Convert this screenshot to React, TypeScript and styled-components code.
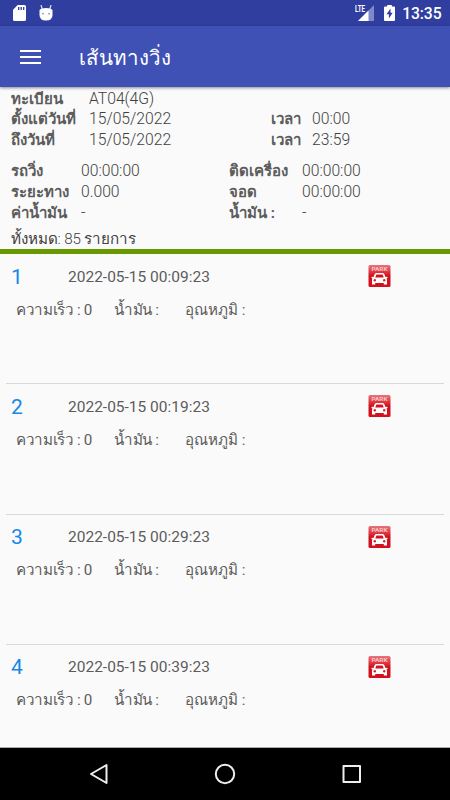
import React from 'react';
import styled, { createGlobalStyle } from 'styled-components';

const GlobalStyle = createGlobalStyle`
  * { box-sizing: border-box; }
  body {
    margin: 0;
    font-family: Roboto, sans-serif;
    background: #fafafa;
  }
`;

const Screen = styled.div`
  display: flex;
  flex-direction: column;
  width: 450px;
  height: 800px;
  overflow: hidden;
  background: #fafafa;
  color: #5c5c5c;
`;

const StatusBar = styled.header`
  display: flex;
  align-items: center;
  flex: 0 0 26px;
  height: 26px;
  padding: 0 8.5px 0 13px;
  background: #303f9f;
  color: #fff;
`;

const StatusIcons = styled.div`
  display: flex;
  gap: 13px;
  flex: 1;
`;

const Clock = styled.time`
  margin-left: 7.5px;
  font-size: 15.7px;
  font-weight: 500;
  line-height: 24px;
  letter-spacing: -0.1px;
  padding-top: 2px;
`;

const Battery = styled.svg`
  margin-left: 8.5px;
`;

const Toolbar = styled.div`
  display: flex;
  align-items: center;
  flex: 0 0 61px;
  padding: 0 20px;
  gap: 37px;
  background: #3f51b5;
  color: #fff;
  box-shadow: 0 1px 3px rgba(0, 0, 0, 0.45);
  z-index: 1;
`;

const Title = styled.h1`
  margin: 3px 0 0;
  font-size: 20.5px;
  font-weight: 400;
  line-height: 40px;
  white-space: nowrap;
`;

const Summary = styled.section`
  flex: 0 0 167px;
  padding: 1.5px 11px 0;
  border-bottom: 5px solid #669900;
`;

const Fields = styled.dl<{ $columns: string; $gap?: number }>`
  display: grid;
  grid-template-columns: ${(p) => p.$columns};
  grid-auto-rows: 20.8px;
  margin: 0 0 ${(p) => p.$gap ?? 0}px;
  line-height: 20.8px;
  font-size: 15.7px;
  white-space: nowrap;
`;

const Label = styled.dt<{ $start?: boolean }>`
  font-weight: 700;
  font-size: 15px;
  ${(p) => p.$start && 'grid-column-start: 1;'}
`;

const Value = styled.dd`
  margin: 0;
  font-weight: 300;
  color: #404040;
`;

const Total = styled.p`
  margin: 0;
  font-size: 15.2px;
  line-height: 20px;
  font-weight: 300;
  letter-spacing: -0.1px;
  color: #404040;
`;

const List = styled.main`
  flex: 1;
  min-height: 0;
  overflow: hidden;
  padding: 0 6px;
`;

const Item = styled.article`
  height: 130.3px;
  padding-top: 8px;
  border-bottom: 1px solid #d8d8d8;
`;

const ItemHead = styled.div`
  display: grid;
  grid-template-columns: 57px 300px 24px;
  align-items: center;
  height: 29px;
  padding-left: 5px;
`;

const Index = styled.span`
  font-size: 21px;
  font-weight: 400;
  color: #1588e8;
`;

const Stamp = styled.time`
  font-size: 15.5px;
  font-weight: 400;
`;

const Readings = styled.div`
  display: grid;
  grid-template-columns: 98px 71px 1fr;
  margin-top: 7.5px;
  padding-left: 10px;
  font-size: 15.2px;
  line-height: 22px;
  white-space: nowrap;
`;

const Reading = styled.span<{ $tracking?: number }>`
  letter-spacing: ${(p) => p.$tracking ?? 0}px;
`;

const NavBar = styled.nav`
  display: flex;
  justify-content: space-between;
  align-items: center;
  flex: 0 0 53px;
  padding: 0 87px;
  border-top: 1px solid #aaa;
  background: #000;
`;

const SdCard = () => (
  <svg width="13" height="16" viewBox="0 0 13 16">
    <path fill="#fff" d="M4.7 0H11.4Q13 0 13 1.6V14.4Q13 16 11.4 16H1.6Q0 16 0 14.4V4.7Z" />
    <path stroke="#303f9f" strokeWidth="1.3" d="M5.7 2v3M8.2 2v3M10.7 2v3" />
  </svg>
);

const Droid = () => (
  <svg width="14" height="16" viewBox="0 0 14 16">
    <path stroke="#dfe2f3" strokeWidth="1.2" d="M2 0l1.2 4M12 0l-1.2 4" />
    <path fill="#fff" d="M.5 5Q2 3 7 3T13.500 5V10Q13.500 15.500 7 15.500T.5 10Z" />
    <circle cx="4" cy="8.700" r=".8" fill="#6570b8" />
    <circle cx="10" cy="8.700" r=".8" fill="#6570b8" />
  </svg>
);

const Signal = () => (
  <svg width="20" height="18" viewBox="0 0 20 18">
    <path fill="#8089c5" d="M19 1V17H3Z" />
    <path fill="#fff" d="M13.500 6.500V17H3Z" />
    <path fill="#303f9f" d="M0 0h11v9H0z" />
    <text x="0" y="8" fill="#fff" fontFamily="Roboto" fontSize="8.500" fontWeight="700" textLength="10" lengthAdjust="spacingAndGlyphs">LTE</text>
  </svg>
);

const BatteryCharging = () => (
  <Battery width="11" height="16" viewBox="0 0 11 16">
    <path fill="#fff" d="M3.200 0H7.800V1.500H10Q11 1.500 11 2.500V15Q11 16 10 16H1Q0 16 0 15V2.500Q0 1.500 1 1.500H3.200Z" />
    <path fill="#303f9f" d="M6.500 3.500L2.500 9.300H4.900V13.500L8.700 7.700H6.500Z" />
  </Battery>
);

const MenuIcon = () => (
  <svg width="22" height="16" viewBox="0 0 22 16">
    <path stroke="#fff" strokeWidth="2.200" d="M0 2h21M0 8h21M0 14h21" />
  </svg>
);

const ParkIcon = () => (
  <svg width="23" height="23" viewBox="0 0 23 23">
    <defs>
      <linearGradient id="parkRed" x1="0" y1="0" x2="0" y2="1">
        <stop offset="0" stopColor="#e8747a" />
        <stop offset=".35" stopColor="#dc3039" />
        <stop offset=".5" stopColor="#d0101c" />
        <stop offset="1" stopColor="#d3101e" />
      </linearGradient>
    </defs>
    <rect x=".5" y="0" width="22" height="22" rx="1.500" fill="url(#parkRed)" />
    <text x="3.500" y="6" fill="#f6c5c8" fontFamily="Roboto" fontSize="6" fontWeight="700" textLength="16" lengthAdjust="spacingAndGlyphs">PARK</text>
    <path fill="#fff" fillRule="evenodd" d="M6.500 9.500Q7 8 8.300 8H14.700Q16 8 16.500 9.500L17.500 12L19.500 11.800V13L18.500 13.500Q19 14 19 15V19.500H15.800V18H7.200V19.500H4V15Q4 14 4.500 13.500L3.500 13V11.800L5.500 12ZM8.300 9.500L7.300 12.500H15.700L14.700 9.500Z" />
    <circle cx="6.800" cy="15.300" r="1.200" fill="#d3202c" />
    <circle cx="16.200" cy="15.300" r="1.200" fill="#d3202c" />
  </svg>
);

const items = [
  { id: 1, time: '2022-05-15 00:09:23' },
  { id: 2, time: '2022-05-15 00:19:23' },
  { id: 3, time: '2022-05-15 00:29:23' },
  { id: 4, time: '2022-05-15 00:39:23' },
];

export default function App() {
  return (
    <Screen>
      <GlobalStyle />
      <StatusBar>
        <StatusIcons>
          <SdCard />
          <Droid />
        </StatusIcons>
        <Signal />
        <BatteryCharging />
        <Clock>13:35</Clock>
      </StatusBar>
      <Toolbar>
        <MenuIcon />
        <Title>เส้นทางวิ่ง</Title>
      </Toolbar>
      <Summary>
        <Fields $columns="78px 182px 41px 1fr" $gap={10.5}>
          <Label>ทะเบียน</Label>
          <Value>AT04(4G)</Value>
          <Label $start>ตั้งแต่วันที่</Label>
          <Value>15/05/2022</Value>
          <Label>เวลา</Label>
          <Value>00:00</Value>
          <Label $start>ถึงวันที่</Label>
          <Value>15/05/2022</Value>
          <Label>เวลา</Label>
          <Value>23:59</Value>
        </Fields>
        <Fields $columns="70px 148px 73px 1fr" $gap={5}>
          <Label>รถวิ่ง</Label>
          <Value>00:00:00</Value>
          <Label>ติดเครื่อง</Label>
          <Value>00:00:00</Value>
          <Label>ระยะทาง</Label>
          <Value>0.000</Value>
          <Label>จอด</Label>
          <Value>00:00:00</Value>
          <Label>ค่าน้ำมัน</Label>
          <Value>-</Value>
          <Label>น้ำมัน :</Label>
          <Value>-</Value>
        </Fields>
        <Total>ทั้งหมด: 85 รายการ</Total>
      </Summary>
      <List>
        {items.map((item) => (
          <Item key={item.id}>
            <ItemHead>
              <Index>{item.id}</Index>
              <Stamp>{item.time}</Stamp>
              <ParkIcon />
            </ItemHead>
            <Readings>
              <Reading $tracking={-0.35}>ความเร็ว : 0</Reading>
              <Reading $tracking={-0.35}>น้ำมัน :</Reading>
              <Reading>อุณหภูมิ :</Reading>
            </Readings>
          </Item>
        ))}
      </List>
      <NavBar>
        <svg width="22" height="22" viewBox="0 0 22 22" fill="none" stroke="#eee" strokeWidth="2" strokeLinejoin="round">
          <path d="M19.500 2V20L4 11Z" />
        </svg>
        <svg width="22" height="22" viewBox="0 0 22 22" fill="none" stroke="#eee" strokeWidth="2">
          <circle cx="11" cy="11" r="9.200" />
        </svg>
        <svg width="22" height="22" viewBox="0 0 22 22" fill="none" stroke="#eee" strokeWidth="2" strokeLinejoin="round">
          <path d="M2.500 3H19V19H2.500Z" />
        </svg>
      </NavBar>
    </Screen>
  );
}
